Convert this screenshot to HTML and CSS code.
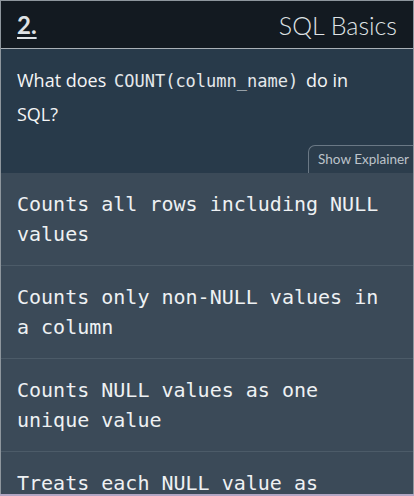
FILE: index.html
```html
<!DOCTYPE html>
<html>
<head>
<meta charset="utf-8">
<link rel="stylesheet" href="styles.css">
</head>
<body>
<div class="card">
  <header class="head">
    <span class="num">2.</span>
    <span class="topic">SQL Basics</span>
  </header>
  <section class="question">
    <p class="qtext">What does <code class="code">COUNT(column_name)</code> do in SQL?</p>
    <div class="tabrow"><span class="tab">Show Explainer</span></div>
  </section>
  <ul class="options">
    <li class="opt">Counts all rows including NULL values</li>
    <li class="opt">Counts only non-NULL values in a column</li>
    <li class="opt">Counts NULL values as one unique value</li>
    <li class="opt">Treats each NULL value as distinct</li>
  </ul>
</div>
<div class="bottomline"></div>
</body>
</html>
```

FILE: styles.css
```css
html, body {
  margin: 0;
  padding: 0;
  height: 496px;
  overflow: hidden;
  background: #3b4a58;
}
.card {
  box-sizing: border-box;
  width: 414px;
  height: 496px;
  border: 1px solid #8e969d;
  border-bottom: none;
  background: #3b4a58;
  overflow: hidden;
}
.head {
  height: 47px;
  background: #131a21;
  border-bottom: 1px solid #a9b0b6;
  display: flex;
  align-items: center;
  justify-content: space-between;
  padding: 0 16px;
  font-family: "Lato", "Open Sans", sans-serif;
  color: #dfe2e5;
}
.num {
  font-size: 24px;
  font-weight: 700;
  text-decoration: underline;
  text-underline-offset: 3px;
  text-decoration-thickness: 2px;
}
.topic {
  font-size: 25px;
  font-weight: 300;
}
.question {
  background: #283a4a;
  padding: 15px 0 0 16px;
}
.qtext {
  margin: 0;
  padding-right: 40px;
  font-family: "Open Sans", "Lato", sans-serif;
  font-size: 18px;
  line-height: 33px;
  color: #f4f5f6;
}
.code {
  font-family: "DejaVu Sans Mono", monospace;
  font-size: 17px;
  margin: 0 3px;
  color: #e4e8eb;
}
.tabrow {
  display: flex;
  justify-content: flex-end;
  margin-top: 14px;
}
.tab {
  box-sizing: border-box;
  height: 28px;
  padding: 5px 4px 0 9px;
  border: 1px solid #6a7885;
  border-right: none;
  border-bottom: none;
  border-top-left-radius: 7px;
  background: #2c3d4c;
  font-family: "Lato", "Open Sans", sans-serif;
  font-size: 13.5px;
  color: #bcc3ca;
}
.options {
  list-style: none;
  margin: 0;
  padding: 0;
}
.opt {
  padding: 16px 17px 16px 16px;
  border-bottom: 1px solid #4c5b68;
  font-family: "DejaVu Sans Mono", monospace;
  font-size: 20px;
  line-height: 30px;
  color: #eef1f3;
}
.bottomline {
  position: fixed;
  left: 0;
  right: 0;
  bottom: 0;
  height: 2px;
  background: #b3a6c4;
}
```
